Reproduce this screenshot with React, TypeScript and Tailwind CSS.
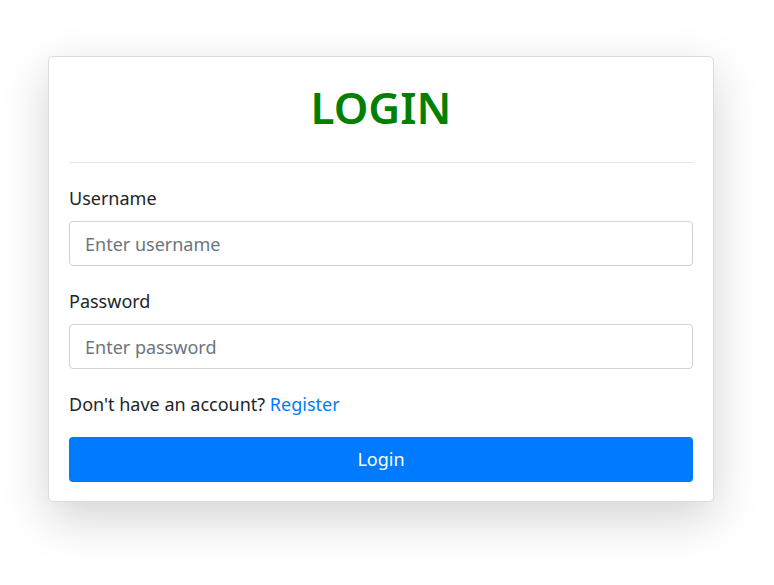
import React from 'react';

export default function App() {
  return (
    <div
      className="min-h-[585px] bg-white pt-[56px] pl-[48px]"
      style={{ fontFamily: '"Noto Sans", "Open Sans", Arial, sans-serif' }}
    >
      <div className="w-[666px] rounded-[5px] border border-[#dcdcdc] bg-white px-[20px] pt-[20px] pb-[19px] shadow-[0_1rem_3rem_rgba(0,0,0,0.175)]">
        {/* Header */}
        <h1 className="text-center text-[44px] font-semibold leading-[60px] text-[#008000]">LOGIN</h1>
        <div className="mt-[25px] border-t border-[#e5e5e5]" />

        {/* Form */}
        <form className="mt-[22px]" onSubmit={(e) => e.preventDefault()}>
          <label className="block text-[18px] leading-[26px] text-[#212529]">Username</label>
          <input
            type="text"
            placeholder="Enter username"
            className="mt-[10px] block h-[45px] w-full rounded-[4px] border border-[#ced4da] px-[15px] text-[18px] text-[#495057] placeholder:text-[#6c757d] outline-none"
          />

          <label className="mt-[22px] block text-[18px] leading-[26px] text-[#212529]">Password</label>
          <input
            type="password"
            placeholder="Enter password"
            className="mt-[10px] block h-[45px] w-full rounded-[4px] border border-[#ced4da] px-[15px] text-[18px] text-[#495057] placeholder:text-[#6c757d] outline-none"
          />

          <p className="mt-[22px] text-[18px] leading-[26px] text-[#212529]">
            Don't have an account?{' '}
            <a href="#" className="text-[#007bff]">Register</a>
          </p>

          <button
            type="submit"
            className="mt-[20px] block h-[45px] w-full rounded-[4px] bg-[#007bff] text-[18px] text-white"
          >
            Login
          </button>
        </form>
      </div>
    </div>
  );
}
